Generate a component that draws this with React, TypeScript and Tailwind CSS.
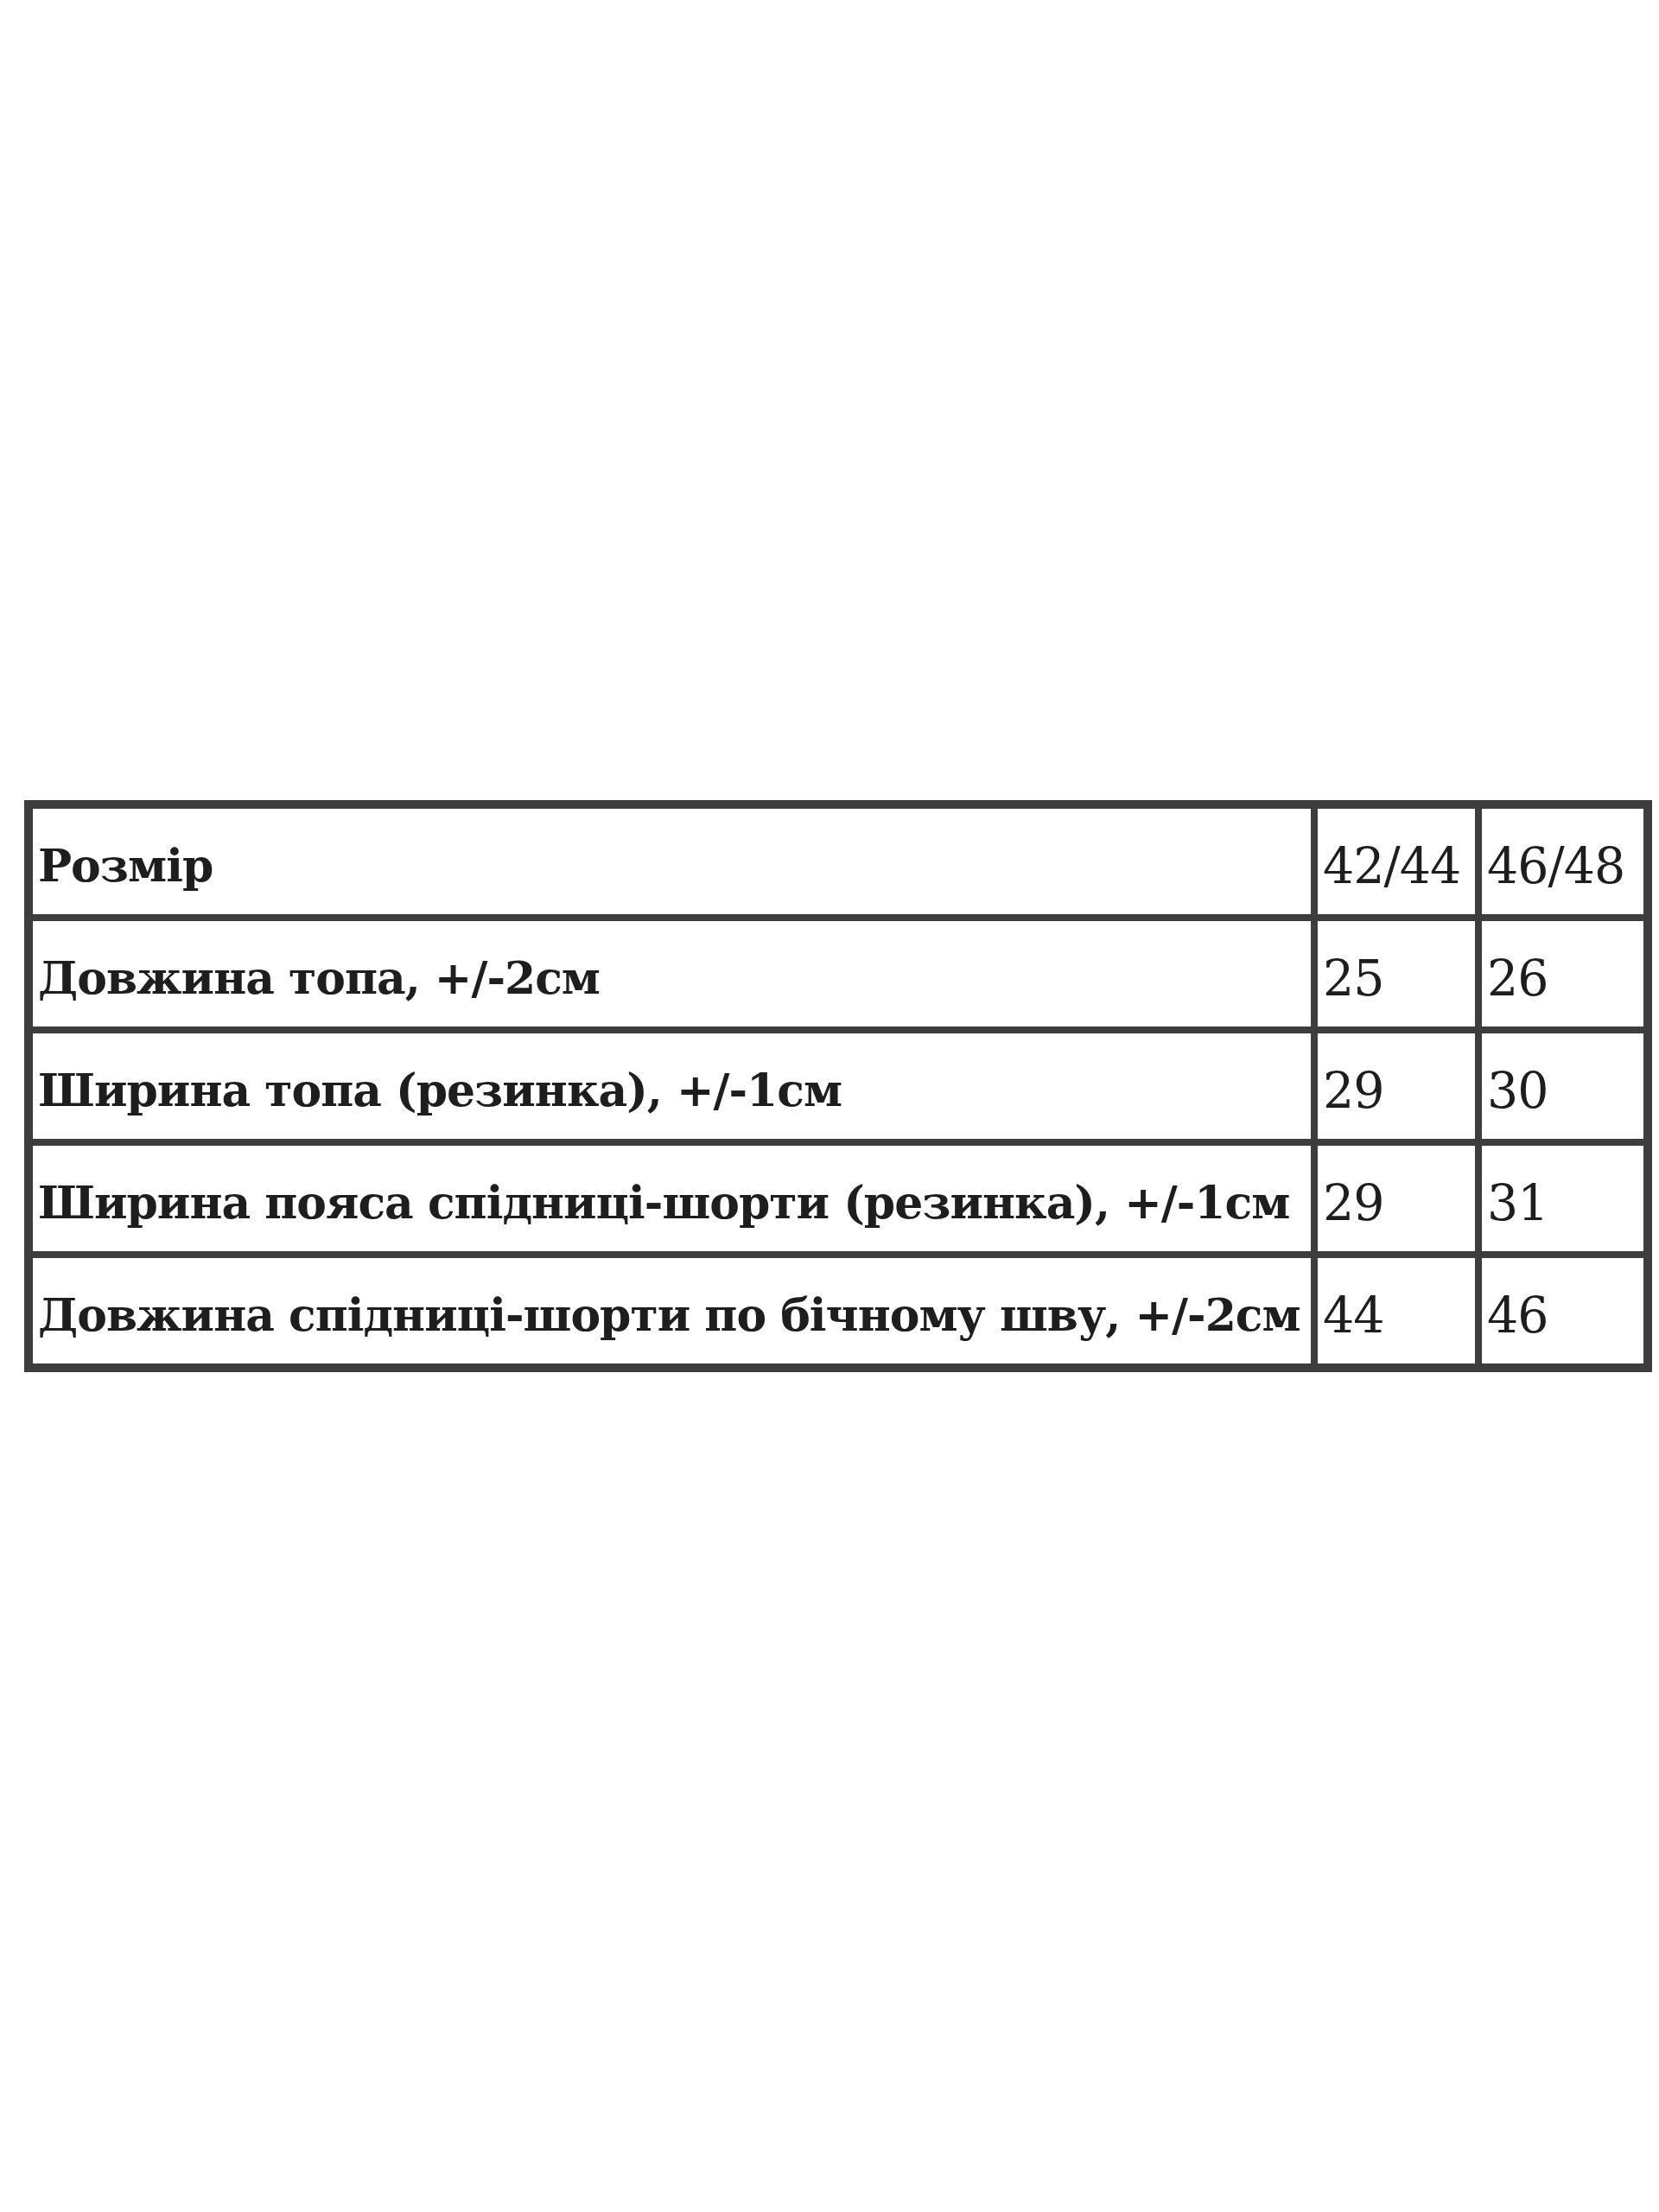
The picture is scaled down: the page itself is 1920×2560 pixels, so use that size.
import React from "react";

const rows: [string, string, string][] = [
  ["Розмір", "42/44", "46/48"],
  ["Довжина топа, +/-2см", "25", "26"],
  ["Ширина топа (резинка), +/-1см", "29", "30"],
  ["Ширина пояса спідниці-шорти (резинка), +/-1см", "29", "31"],
  ["Довжина спідниці-шорти по бічному шву, +/-2см", "44", "46"],
];

export default function App() {
  return (
    <div className="w-[1920px] h-[2560px] bg-white pt-[926px]">
      <div
        className="ml-[28px] w-[1884px] bg-[#3d3d3d] p-[10px] grid grid-cols-[1479px_182px_187px] auto-rows-[122px] gap-[8px] text-[#1e1e1e]"
        style={{ fontFamily: '"DejaVu Serif", serif' }}
      >
        {rows.map((r, i) => (
          <React.Fragment key={i}>
            <div className="bg-white flex items-center pt-[10px] pl-[6px] whitespace-nowrap text-[52px] font-bold tracking-[-1px]">
              {r[0]}
            </div>
            <div className="bg-white flex items-center pt-[12px] pl-[6px] whitespace-nowrap text-[57px] tracking-[-1px]">
              {r[1]}
            </div>
            <div className="bg-white flex items-center pt-[12px] pl-[6px] whitespace-nowrap text-[57px] tracking-[-1px]">
              {r[2]}
            </div>
          </React.Fragment>
        ))}
      </div>
    </div>
  );
}
